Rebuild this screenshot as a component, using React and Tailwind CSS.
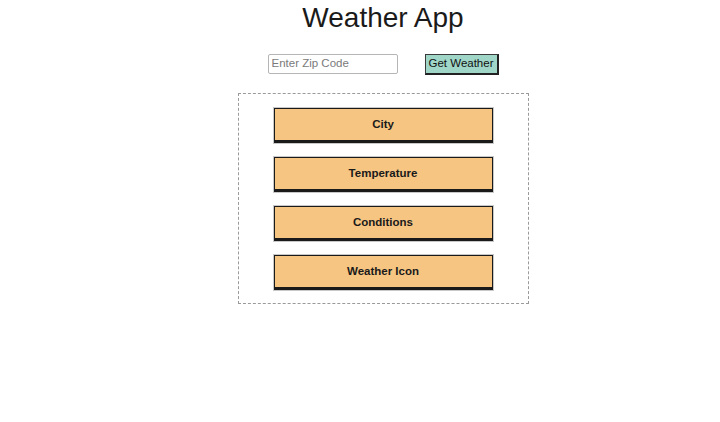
import React from "react";

const items = ["City", "Temperature", "Conditions", "Weather Icon"];

export default function App() {
  return (
    <div
      className="w-[720px] h-[422px] bg-white flex flex-col items-center pl-[46px] pt-[4px]"
      style={{ fontFamily: '"Liberation Sans", Arial, sans-serif' }}
    >
      <h1 className="text-[28px] leading-[28px] text-[#1a1a1a] font-normal">Weather App</h1>
      <div className="flex items-start gap-[27px] mt-[22px]">
        <div className="w-[130px] h-[20px] border border-[#b5b5b5] rounded-[2px] flex items-center px-[3px] text-[11.5px] text-[#7a7a7a]">
          Enter Zip Code
        </div>
        <div className="w-[74px] h-[21px] bg-[#a0d6c8] border border-[#3a3a3a] border-r-2 border-b-2 border-r-[#222] border-b-[#222] flex items-center justify-center text-[11.5px] text-[#111]">
          Get Weather
        </div>
      </div>
      <div className="mt-[18px] w-[291px] h-[211px] border border-dashed border-[#9a9a9a] flex flex-col items-center pt-[14px] gap-[14px]">
        {items.map((t) => (
          <div
            key={t}
            className="w-[219px] h-[35px] bg-[#f6c582] border border-[#1a1a1a] border-b-[3px] ring-1 ring-[#c8c8c8] flex items-center justify-center text-[11.5px] font-bold text-[#1a1a1a]"
          >
            {t}
          </div>
        ))}
      </div>
    </div>
  );
}
